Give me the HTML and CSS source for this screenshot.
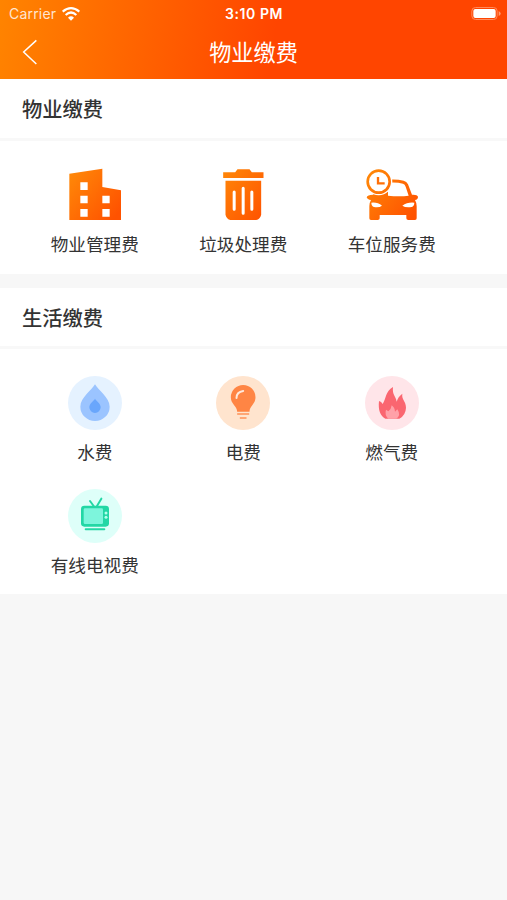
FILE: index.html
```html
<!DOCTYPE html>
<html lang="zh-CN">
<head>
<meta charset="utf-8">
<title>物业缴费</title>
<link rel="stylesheet" href="styles.css">
</head>
<body>
<header class="header">
  <div class="status">
    <div class="carrier"><span class="carrier-name">Carrier</span>
      <svg width="18" height="14" viewBox="0 0 54 42" fill="none" stroke="#fff" stroke-width="6.5"><path d="M2 14Q27-7 52 14M11 24Q27 9 43 24"/><path d="M18 32Q27 24 36 32L27 41Z" fill="#fff" stroke="none"/></svg>
    </div>
    <div class="time">3:10 PM</div>
    <div class="battery">
      <svg width="31" height="15" viewBox="0 0 93 45"><rect x="2.5" y="4.5" width="76" height="36" rx="11" fill="none" stroke="#ff8a5c" stroke-width="3"/><rect x="7" y="9" width="67" height="27" rx="6" fill="#fff"/><path d="M83 15Q89 18 89 22.500T83 30Z" fill="#ff9a70"/></svg>
    </div>
  </div>
  <nav class="nav">
    <svg class="back" width="16" height="26" viewBox="0 0 48 78" fill="none" stroke="#fff" stroke-width="4.500"><path d="M43 4L5 39L43 75"/></svg>
    <h1 class="title">物业缴费</h1>
  </nav>
</header>
<main>
  <section class="section">
    <h2 class="heading">物业缴费</h2>
    <div class="grid">
      <div class="item">
        <svg class="icon" viewBox="84 39 162 162"><defs><linearGradient id="orange" gradientUnits="userSpaceOnUse" x1="90" y1="60" x2="235" y2="175"><stop offset="0" stop-color="#ff8708"/><stop offset="1" stop-color="#ff5200"/></linearGradient></defs>
          <path fill="url(#orange)" d="M88 56L187 41V96L243 106V195H88Z"/><path fill="#fff" d="M121 82h22v23h-22zM121 122h22v23h-22zM121 162h22v23h-22zM187 122h22v23h-22zM187 162h22v23h-22z"/></svg>
        <span class="label">物业管理费</span>
      </div>
      <div class="item">
        <svg class="icon" viewBox="79.5 39 162 162"><path fill="url(#orange)" d="M101 52H137L144 43H180L187 52H222V69H101ZM108 77H215V179Q212 192 200 195H123Q111 192 108 179Z"/><path d="M134 111V163M161 100V175M187 111V163" stroke="#fff" stroke-width="9" stroke-linecap="round"/></svg>
        <span class="label">垃圾处理费</span>
      </div>
      <div class="item">
        <svg class="icon" viewBox="84 39 162 162"><path fill="url(#orange)" d="M153 74Q180 72 200 77Q209 79 213 88L225 119Q241 118 243 125Q243 133 234 135Q239 143 239 154V190Q239 195 234 195H214Q208 195 208 190V180H128V190Q128 195 122 195H102Q97 195 97 190V154Q97 143 102 135Q91 134 89 127Q91 119 108 119L120 100Z"/><path fill="#fff" d="M158 83Q182 82 198 86Q204 88 206 95L215 122Q188 126 153 122V105Z"/><circle cx="125" cy="80" r="41" fill="#fff"/><circle cx="125" cy="80" r="33" fill="#fff" stroke="url(#orange)" stroke-width="8"/><path d="M123 66V85H143" fill="none" stroke="#ff7008" stroke-width="7"/><path fill="#fff" d="M103 143Q122 141 135 152Q126 159 111 156Q103 153 103 143ZM232 143Q211 141 196 152Q206 159 224 156Q232 153 232 143Z"/></svg>
        <span class="label">车位服务费</span>
      </div>
    </div>
  </section>
  <section class="section">
    <h2 class="heading">生活缴费</h2>
    <div class="grid">
      <div class="item">
        <svg class="icon" viewBox="84 33 162 162"><circle cx="165" cy="114" r="81" fill="#e5f2ff"/><path d="M165 58C173 74 209 98 209 125A44 43 0 0 1 121 125C121 98 157 74 165 58Z" fill="#9bc4ff"/><path d="M165 101C169 108 182 115 182 127A17 17 0 0 1 148 127C148 115 161 108 165 101Z" fill="#69a6fc"/></svg>
        <span class="label">水费</span>
      </div>
      <div class="item">
        <svg class="icon" viewBox="79.5 33 162 162"><circle cx="160.500" cy="114" r="81" fill="#ffe4ce"/><path d="M161 60A37 37 0 0 1 198 97C198 118 180 123 180 140H143C143 123 124 118 124 97A37 37 0 0 1 161 60Z" fill="#ff8544"/><path d="M141 99Q141 81 161 78" fill="none" stroke="#ffe9db" stroke-width="6" stroke-linecap="round"/><path d="M143 147H179M151 159H171" stroke="#ff9157" stroke-width="5"/></svg>
        <span class="label">电费</span>
      </div>
      <div class="item">
        <svg class="icon" viewBox="84 33 162 162"><circle cx="165" cy="114" r="81" fill="#ffe5e9"/><path d="M145 161C130 153 123 136 126 108Q133 109 137 117C147 103 145 79 168 66C165 90 177 94 179 110Q183 95 196 86C193 104 207 108 207 128Q206 151 187 161Z" fill="#fa6670"/><path d="M154 161Q142 150 147 134L154 139Q163 132 164 121Q173 127 174 140L181 133Q193 151 178 161Z" fill="#ffa1a8"/></svg>
        <span class="label">燃气费</span>
      </div>
      <div class="item">
        <svg class="icon" viewBox="84 27 162 162"><circle cx="165" cy="108" r="81" fill="#defff9"/><path d="M150 63L161 78M184 56L171 78" stroke="#22d7a5" stroke-width="6" stroke-linecap="round"/><rect x="123" y="77" width="84" height="63" rx="10" fill="#22d7a5"/><rect x="131" y="85" width="58" height="47" rx="4" fill="#7df5dc"/><circle cx="198" cy="99" r="4.500" fill="#b5ffed"/><circle cx="198" cy="112" r="4.500" fill="#b5ffed"/><path d="M137 148H193" stroke="#22d7a5" stroke-width="6" stroke-linecap="round"/></svg>
        <span class="label">有线电视费</span>
      </div>
    </div>
  </section>
</main>
</body>
</html>
```
FILE: styles.css
```css
* { box-sizing: border-box; }
body {
  margin: 0;
  min-height: 900px;
  background: #f7f7f7;
  color: #333;
  font-family: "Noto Sans CJK SC", sans-serif;
}
svg { display: block; }
.header {
  height: 79px;
  color: #fff;
  background: linear-gradient(100deg, #ff8400 0%, #ff4500 54%);
}
.status {
  display: grid;
  grid-template-columns: 1fr auto 1fr;
  align-items: center;
  height: 27px;
  padding: 0 5px 0 9px;
  font-family: Inter, sans-serif;
  font-size: 13.5px;
}
.carrier { display: flex; align-items: center; gap: 6px; }
.carrier-name { color: #ffe5d0; letter-spacing: 0.2px; font-size: 14px; }
.time { font-weight: 600; font-size: 14px; letter-spacing: 0.6px; margin-right: 3px; }
.battery { justify-self: end; }
.nav {
  display: grid;
  grid-template-columns: 60px 1fr 60px;
  align-items: center;
  height: 50px;
}
.back { margin-left: 22px; }
.title {
  margin: -2px 0 0;
  font-size: 22.2px;
  font-weight: 400;
  line-height: 32px;
  text-align: center;
}
.section { background: #fff; }
.section + .section { margin-top: 14px; }
.heading {
  height: 62px;
  margin: 0;
  padding-left: 22px;
  border-bottom: 3px solid #f8f8f8;
  font-size: 20.3px;
  font-weight: 500;
  line-height: 59px;
}
.section + .section .heading { height: 61px; line-height: 58px; }
.grid {
  display: grid;
  grid-template-columns: repeat(3, 148.5px);
  row-gap: 31px;
  padding: 27px 0 24px 20.5px;
}
.section + .section .grid { padding-bottom: 23px; }
.item {
  display: flex;
  flex-direction: column;
  align-items: center;
  height: 82px;
}
.icon { width: 54px; height: 54px; flex: none; }
.label {
  margin-top: 10px;
  font-size: 17.6px;
  line-height: 24px;
  white-space: nowrap;
}
```
